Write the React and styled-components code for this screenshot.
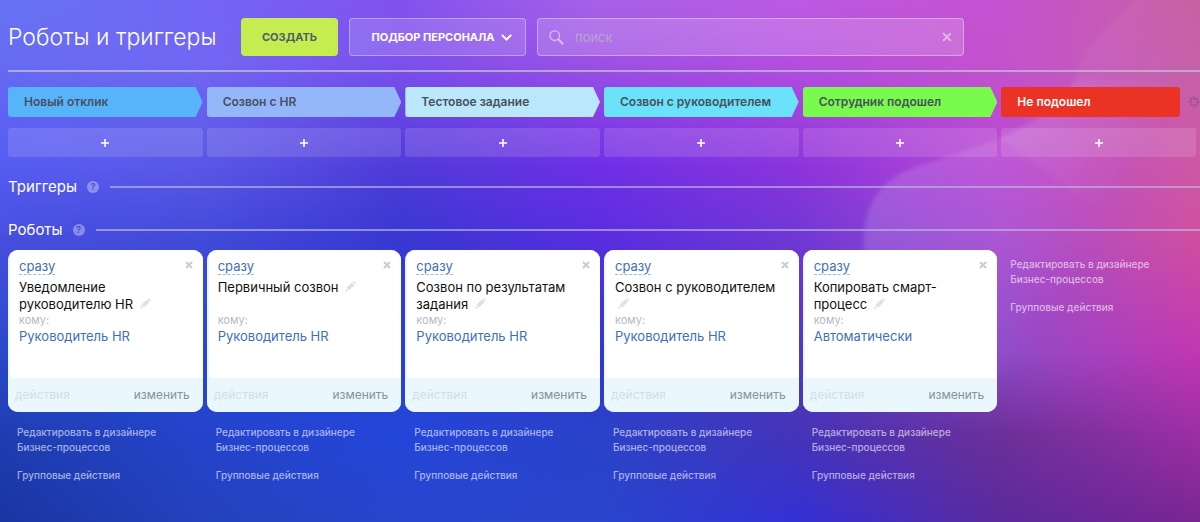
import React from 'react'
import styled, { createGlobalStyle } from 'styled-components';

const stages = [
    { title: 'Новый отклик', color: '#58b4fa' },
    { title: 'Созвон с HR', color: '#93b7f9' },
    { title: 'Тестовое задание', color: '#bae7f9' },
    { title: 'Созвон с руководителем', color: '#6ae2f9' },
    { title: 'Сотрудник подошел', color: '#78fb4c' },
    { title: 'Не подошел', color: '#ea3324', last: true },
];

const robots = [
    { title: 'Уведомление руководителю HR', to: 'Руководитель HR' },
    { title: 'Первичный созвон', to: 'Руководитель HR' },
    { title: 'Созвон по результатам задания', to: 'Руководитель HR' },
    { title: 'Созвон с руководителем', to: 'Руководитель HR' },
    { title: 'Копировать смарт-процесс', to: 'Автоматически' },
];

// every band fades in over the one before it, from its start to its end (in %)
const bands = [
    { from: 0, to: 0, colors: '#6674f2, #7266f6, #8352ee, #a862e8, #bc5ae2, #c652d2, #c8609f' },
    { from: 0, to: 12, colors: '#666bf3, #7267f4, #7c50ec, #9d50e4, #b54ee0, #c452cc, #c762a8' },
    { from: 12, to: 32, colors: '#565cf2, #5a58e6, #4f3bd9, #6f2fe6, #8c34dc, #b748d4, #cf58a4' },
    { from: 32, to: 45, colors: '#484fe0, #434bd9, #3938d2, #5b2de0, #7138d4, #a84cd2, #d0509f' },
    { from: 45, to: 68, colors: '#2a49c8, #2848d0, #2a40d0, #3238cc, #5238c2, #8d4bc8, #c236b2' },
    { from: 68, to: 83, colors: '#1f3eb2, #2444cc, #2446da, #2a42c8, #4634b8, #6c3099, #9c2fa6' },
    { from: 83, to: 100, colors: '#1a35a2, #2442bc, #2846cc, #2a46cc, #3430d4, #5a2a9c, #7a2592' },
];

const Cross = ({ size, width }) => (
    <svg width={size} height={size} viewBox="0 0 10 10" stroke="currentColor" strokeWidth={width}>
        <path d="M1.2 1.2 8.8 8.8M8.8 1.2 1.2 8.8" />
    </svg>
)

const Pencil = () => (
    <svg width="11" height="11" viewBox="0 0 11 11" fill="currentColor">
        <path d="M.3 10.7.9 7.7 3.3 10.1zM1.4 6.9 6.8 1.5 9.5 4.2 4.1 9.6zM7.4.9 8 .4Q8.6 0 9.2.5L10.5 1.8Q11 2.4 10.6 3L10.1 3.6z" />
    </svg>
)

const Gear = () => (
    <svg width="12" height="12" viewBox="0 0 12 12" fill="none" stroke="currentColor">
        <circle cx="6" cy="6" r="3.4" strokeWidth="1.6" />
        <path strokeWidth="1.8" d="M6 .3V2M6 10V11.7M.3 6H2M10 6H11.7M2 2 3.1 3.1M8.9 8.9 10 10M10 2 8.9 3.1M3.1 8.9 2 10" />
    </svg>
)

const Links = ({ high }) => (
    <LinkList $high={high}>
        <a href="#designer">Редактировать в дизайнере Бизнес-процессов</a>
        <a href="#group">Групповые действия</a>
    </LinkList>
)

const Section = ({ title }) => (
    <SectionHead>
        <h2>{title}</h2>
        <Hint type="button" aria-label="Справка">?</Hint>
        <hr />
    </SectionHead>
)

const App = () => {
    return (
        <Page>
            <GlobalStyle />
            <Backdrop aria-hidden="true">
                {bands.map((band) => (
                    <Band key={band.to} $from={band.from} $to={band.to} $colors={band.colors} />
                ))}
                <svg viewBox="0 0 1200 522" preserveAspectRatio="none">
                    <defs>
                        <linearGradient id="petal" gradientUnits="userSpaceOnUse" x1="870" y1="190" x2="1060" y2="300">
                            <stop offset="0" stopColor="#fff" stopOpacity=".15" />
                            <stop offset="1" stopColor="#fff" stopOpacity="0" />
                        </linearGradient>
                        <linearGradient id="petalTop" gradientUnits="userSpaceOnUse" x1="1020" y1="90" x2="1150" y2="150">
                            <stop offset="0" stopColor="#fff" stopOpacity=".07" />
                            <stop offset="1" stopColor="#fff" stopOpacity="0" />
                        </linearGradient>
                        <filter id="soft"><feGaussianBlur stdDeviation="2" /></filter>
                    </defs>
                    <path filter="url(#soft)" fill="url(#petal)" d="M864 250C862 205 880 178 920 165C1000 142 1050 120 1075 80L1220 80V470C1100 440 870 400 864 250Z" />
                    <path filter="url(#soft)" fill="url(#petalTop)" d="M1000 138C1050 120 1068 98 1078 70C1090 40 1120 10 1150 -10H1220V300Z" />
                </svg>
            </Backdrop>

            <Header>
                <h1>Роботы и триггеры</h1>
                <CreateButton type="button">СОЗДАТЬ</CreateButton>
                <FunnelButton type="button">
                    ПОДБОР ПЕРСОНАЛА
                    <svg width="11" height="7" viewBox="0 0 11 7" fill="none" stroke="currentColor" strokeWidth="2">
                        <path d="M.8 .9 5.5 5.5 10.2 .9" />
                    </svg>
                </FunnelButton>
                <Search>
                    <svg width="15" height="15" viewBox="0 0 15 15" fill="none" stroke="currentColor">
                        <circle cx="5.7" cy="5.7" r="4.8" strokeWidth="1.4" />
                        <path strokeWidth="2.2" d="M9.3 9.3 14.2 14.2" />
                    </svg>
                    <input type="text" placeholder="поиск" aria-label="поиск" />
                    <button type="button" aria-label="Очистить"><Cross size={10} width={1.8} /></button>
                </Search>
            </Header>

            <Columns>
                {stages.map((stage) => (
                    <StageCell key={stage.title}>
                        <Stage $color={stage.color} $last={stage.last}>{stage.title}</Stage>
                        {stage.last && <GearButton type="button" aria-label="Настройки"><Gear /></GearButton>}
                    </StageCell>
                ))}
            </Columns>
            <AddRow>
                {stages.map((stage) => (
                    <AddButton key={stage.title} type="button" aria-label={'Добавить: ' + stage.title}>
                        <svg width="8" height="8" viewBox="0 0 8 8" stroke="currentColor" strokeWidth="1.6">
                            <path d="M4 0V8M0 4H8" />
                        </svg>
                    </AddButton>
                ))}
            </AddRow>

            <Section title="Триггеры" />
            <Section title="Роботы" />

            <Columns>
                {robots.map((robot) => (
                    <div key={robot.title}>
                        <Card>
                            <CardBody>
                                <CardTop>
                                    <a href="#when">сразу</a>
                                    <button type="button" aria-label="Удалить"><Cross size={8} width={2.6} /></button>
                                </CardTop>
                                <h3>
                                    {robot.title}{' '}
                                    <EditButton type="button" aria-label="Переименовать"><Pencil /></EditButton>
                                </h3>
                                <p>кому:</p>
                                <Person href="#person">{robot.to}</Person>
                            </CardBody>
                            <CardFooter>
                                <FooterButton type="button" $muted>действия</FooterButton>
                                <FooterButton type="button">изменить</FooterButton>
                            </CardFooter>
                        </Card>
                        <Links />
                    </div>
                ))}
                <Links high />
            </Columns>
        </Page>
    )
}

const GlobalStyle = createGlobalStyle`
    *{
        box-sizing: border-box;
    }
    body{
        margin: 0;
        font-family: Inter, 'Noto Sans', sans-serif;
        background: #2846cc;
    }
    h1, h2, h3, p{
        margin: 0;
        font-weight: 400;
    }
    button{
        margin: 0;
        padding: 0;
        border: none;
        background: none;
        font-family: inherit;
        color: inherit;
        cursor: pointer;
    }
    a{
        text-decoration: none;
    }
    svg{
        display: block;
        flex: none;
    }
`
const Page = styled.main`
    position: relative;
    min-height: 100vh;
    padding: 18px 0 0 8px;
    overflow: hidden;
    color: #fff;
`
const Backdrop = styled.div`
    position: absolute;
    inset: 0;
    z-index: -1;
    svg{
        position: absolute;
        width: 100%;
        height: 100%;
    }
`
const Band = styled.div`
    position: absolute;
    inset: 0;
    background: linear-gradient(90deg, ${(p) => p.$colors});
    mask-image: linear-gradient(180deg, transparent ${(p) => p.$from}%, #000 ${(p) => p.$to}%);
`
const Header = styled.header`
    display: flex;
    align-items: center;
    padding-bottom: 14px;
    border-bottom: 2px solid rgba(190, 185, 215, 0.8);
    h1{
        width: 233px;
        font-size: 23px;
        font-weight: 300;
        line-height: 38px;
        white-space: nowrap;
    }
`
const CreateButton = styled.button`
    width: 97px;
    height: 38px;
    border-radius: 4px;
    background: #c5ed50;
    color: #535c69;
    font-size: 11px;
    font-weight: 700;
`
const FunnelButton = styled.button`
    display: flex;
    align-items: center;
    justify-content: center;
    gap: 6px;
    width: 177px;
    height: 38px;
    margin-left: 11px;
    padding-left: 8px;
    border: 1px solid rgba(255, 255, 255, 0.35);
    border-radius: 4px;
    background: rgba(255, 255, 255, 0.15);
    font-size: 11px;
    font-weight: 700;
`
const Search = styled.div`
    display: flex;
    align-items: center;
    flex: 0 1 427px;
    height: 38px;
    margin-left: 11px;
    padding: 0 11px;
    border: 1px solid rgba(255, 255, 255, 0.35);
    border-radius: 4px;
    background: rgba(255, 255, 255, 0.17);
    color: rgba(255, 255, 255, 0.5);
    input{
        flex: 1;
        min-width: 0;
        padding: 0 11px;
        border: none;
        outline: none;
        background: none;
        color: #fff;
        font-family: inherit;
        font-size: 13px;
        &::placeholder{
            color: #b7a6cd;
            opacity: 1;
        }
    }
`
const Columns = styled.div`
    display: grid;
    grid-template-columns: repeat(6, 1fr);
    column-gap: 4px;
    padding-right: 4px;
`
const StageCell = styled.div`
    display: flex;
    align-items: center;
    margin-top: 15px;
`
const Stage = styled.div`
    flex: 1;
    height: 30px;
    margin-right: ${(p) => (p.$last ? '8px' : '0')};
    padding-left: 16px;
    border-radius: 3px;
    background: ${(p) => p.$color};
    clip-path: ${(p) => (p.$last ? 'none' : 'polygon(0 0, calc(100% - 7px) 0, 100% 50%, calc(100% - 7px) 100%, 0 100%)')};
    color: ${(p) => (p.$last ? '#fff' : '#47505e')};
    font-size: 12px;
    font-weight: 600;
    line-height: 30px;
    white-space: nowrap;
`
const GearButton = styled.button`
    margin-right: -4px;
    color: rgba(130, 70, 130, 0.45);
`
const AddRow = styled(Columns)`
    margin-top: 11px;
    margin-bottom: 15px;
`
const AddButton = styled.button`
    display: flex;
    align-items: center;
    justify-content: center;
    height: 29px;
    border-radius: 3px;
    background: rgba(255, 255, 255, 0.13);
`
const SectionHead = styled.div`
    display: flex;
    align-items: center;
    height: 30px;
    margin-bottom: 13px;
    h2{
        font-size: 15px;
        line-height: 30px;
    }
    hr{
        flex: 1;
        height: 2px;
        margin: 0 0 0 11px;
        border: none;
        background: rgba(190, 185, 225, 0.65);
    }
    & + &{
        margin-bottom: 5px;
    }
`
const Hint = styled.button`
    width: 12px;
    height: 12px;
    margin-left: 10px;
    border-radius: 50%;
    background: rgba(255, 255, 255, 0.35);
    color: #4a50d8;
    font-size: 9px;
    font-weight: 700;
    line-height: 12px;
`
const Card = styled.article`
    display: flex;
    flex-direction: column;
    overflow: hidden;
    border-radius: 10px;
    background: #eaf7fd;
`
const CardBody = styled.div`
    min-height: 128px;
    margin-left: 2px;
    padding: 9px 10px 0 9px;
    border-radius: 0 0 0 3px;
    background: #fff;
    h3{
        min-height: 34px;
        margin-top: 4px;
        color: #111;
        font-size: 13px;
        line-height: 17px;
    }
    p{
        color: #b6bac6;
        font-size: 11px;
        line-height: 14px;
    }
`
const CardTop = styled.div`
    display: flex;
    justify-content: space-between;
    align-items: flex-start;
    a{
        border-bottom: 1px dashed #9dbbe4;
        color: #3f70b5;
        font-size: 13px;
        line-height: 15px;
    }
    button{
        margin-top: 2px;
        color: #cbced1;
    }
`
const EditButton = styled.button`
    display: inline-block;
    margin-left: 3px;
    color: #dfe0e2;
`
const Person = styled.a`
    display: block;
    color: #3f70b5;
    font-size: 13px;
    line-height: 18px;
`
const CardFooter = styled.div`
    display: flex;
    justify-content: space-between;
    align-items: center;
    height: 34px;
    padding: 0 13px 0 7px;
    background: #eaf7fd;
`
const FooterButton = styled.button`
    color: ${(p) => (p.$muted ? '#d5dee5' : '#87929c')};
    font-size: 12px;
    line-height: 16px;
`
const LinkList = styled.nav`
    display: flex;
    flex-direction: column;
    gap: 13px;
    padding: ${(p) => (p.$high ? '7px' : '13px')} 32px 0 9px;
    a{
        color: rgba(255, 255, 255, 0.6);
        font-size: 10px;
        font-weight: 500;
        line-height: 15px;
    }
`

export default App
